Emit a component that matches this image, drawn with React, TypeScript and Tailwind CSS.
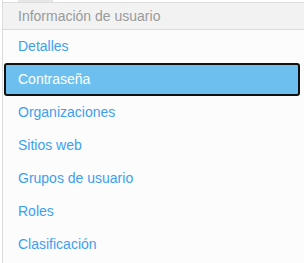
import React from "react";

const items = [
  "Detalles",
  "Contraseña",
  "Organizaciones",
  "Sitios web",
  "Grupos de usuario",
  "Roles",
  "Clasificación",
];

export default function App() {
  return (
    <div
      className="w-[304px] h-[263px] bg-white overflow-hidden text-[14px]"
      style={{ fontFamily: '"Liberation Sans", Arial, sans-serif' }}
    >
      <div className="flex h-full">
        <div className="w-[2px] shrink-0" />
        <div className="flex-1 flex flex-col border-l border-[#dcdcdc] bg-[#fcfcfc]">
          <div className="h-[2px] bg-white">
            <div className="ml-[15px] w-[35px] h-[2px] bg-[#e6e6e6]" />
          </div>
          <div className="h-[28px] flex items-center pl-[15px] bg-[#f2f2f2] border-y border-[#dcdcdc] text-[#9a9a9a]">
            Información de usuario
          </div>
          <div className="flex flex-col">
            {items.map((it) =>
              it === "Contraseña" ? (
                <div
                  key={it}
                  className="h-[33px] ml-[1px] mr-[4px] flex items-center pl-[12px] bg-[#6dbff0] border-2 border-[#111] rounded-[3px] text-white"
                >
                  {it}
                </div>
              ) : (
                <div
                  key={it}
                  className="h-[33px] flex items-center pl-[15px] text-[#3e9ff0]"
                >
                  {it}
                </div>
              )
            )}
          </div>
        </div>
      </div>
    </div>
  );
}
